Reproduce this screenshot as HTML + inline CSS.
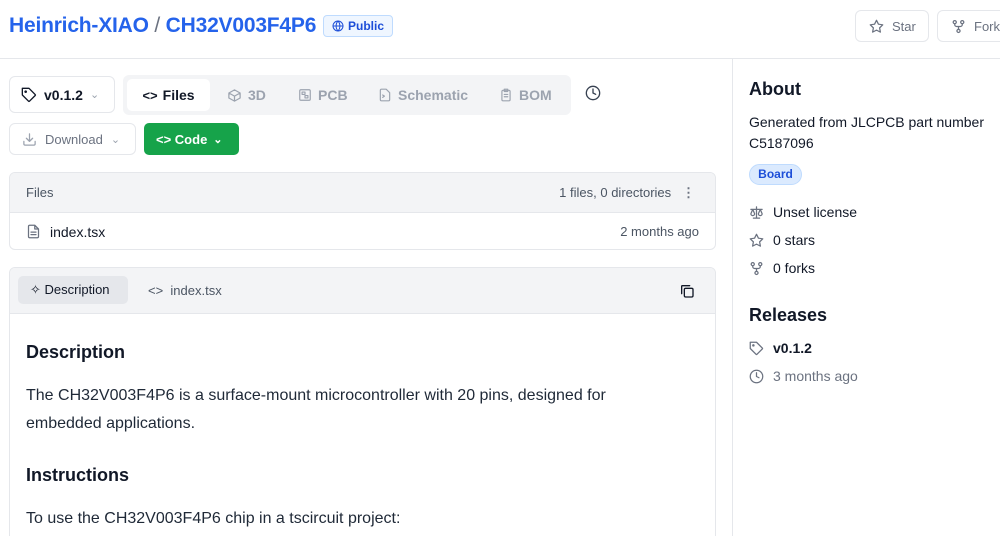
<!DOCTYPE html>
<html style="width:1000px;height:536px;overflow:hidden"><head><meta charset="utf-8"><style>
*{box-sizing:border-box;margin:0;padding:0}
body{width:1000px;height:536px;overflow:hidden;background:#fff;font-family:"Liberation Sans",sans-serif;color:#111827;position:relative}
.a{position:absolute}
svg{fill:none;stroke:currentColor;stroke-width:2;stroke-linecap:round;stroke-linejoin:round}
.btn{position:absolute;border:1px solid #e5e7eb;border-radius:6px;display:flex;align-items:center;background:#fff}
</style></head><body>
<div class="a" style="left:9px;top:14px;font-size:21px;font-weight:bold;color:#2563eb;letter-spacing:-0.2px">Heinrich-XIAO<span style="color:#6b7280;font-weight:normal"> / </span>CH32V003F4P6</div>
<div class="a" style="left:323px;top:15px;width:70px;height:22px;border:1px solid #bfdbfe;background:#eff6ff;border-radius:4px;color:#1d4ed8;font-size:12px;font-weight:bold;display:flex;align-items:center;padding-left:8px;gap:4px"><svg width="12" height="12" viewBox="0 0 24 24"><circle cx="12" cy="12" r="10"/><path d="M2 12h20M12 2a15 15 0 0 1 0 20M12 2a15 15 0 0 0 0 20"/></svg>Public</div>
<div class="btn" style="left:855px;top:10px;width:74px;height:32px;padding-left:13px;gap:8px;color:#6b7280;font-size:13px"><svg width="15" height="15" viewBox="0 0 24 24"><path d="M12 2l3.1 6.3 6.9 1-5 4.9 1.2 6.8L12 17.8 5.8 21l1.2-6.8-5-4.9 6.9-1z"/></svg>Star</div>
<div class="btn" style="left:937px;top:10px;width:80px;height:32px;padding-left:13px;gap:8px;color:#6b7280;font-size:13px"><svg width="15" height="15" viewBox="0 0 24 24"><circle cx="6" cy="5" r="2.5"/><circle cx="18" cy="5" r="2.5"/><circle cx="12" cy="19" r="2.5"/><path d="M6 8v1a3 3 0 0 0 3 3h6a3 3 0 0 0 3-3V8M12 12v4"/></svg>Fork</div>
<div class="a" style="left:0;top:58px;width:1000px;height:1px;background:#e5e7eb"></div>
<div class="a" style="left:732px;top:58px;width:1px;height:478px;background:#e5e7eb"></div>

<div class="btn" style="left:9px;top:76px;width:106px;height:37px;padding-left:11px;gap:7px;font-size:14px;font-weight:bold;color:#111827"><svg width="16" height="16" viewBox="0 0 24 24"><path d="M12 2H2v10l9.3 9.3a1 1 0 0 0 1.4 0l8.6-8.6a1 1 0 0 0 0-1.4z"/><circle cx="7" cy="7" r="1"/></svg>v0.1.2 <span style="color:#9ca3af;font-weight:normal;font-size:11px">⌄</span></div>
<div class="a" style="left:123px;top:75px;width:448px;height:40px;background:#f3f4f6;border-radius:6px"></div>
<div class="a" style="left:127px;top:79px;width:83px;height:32px;background:#fff;border-radius:5px;display:flex;align-items:center;justify-content:center;gap:5px;font-size:14px;font-weight:bold"><span style="font-size:13px">&lt;&gt;</span>Files</div>
<div class="a" style="left:227px;top:87px;font-size:14px;font-weight:bold;color:#9ca3af;display:flex;gap:6px;align-items:center"><svg width="15" height="15" viewBox="0 0 24 24"><path d="M21 8l-9-5-9 5v8l9 5 9-5zM3 8l9 5 9-5M12 13v8"/></svg>3D</div>
<div class="a" style="left:298px;top:87px;font-size:14px;font-weight:bold;color:#9ca3af;display:flex;gap:6px;align-items:center"><svg width="14" height="14" viewBox="0 0 24 24"><rect x="3" y="3" width="18" height="18" rx="2"/><rect x="7" y="7" width="5" height="4"/><rect x="12" y="13" width="5" height="4"/></svg>PCB</div>
<div class="a" style="left:378px;top:87px;font-size:14px;font-weight:bold;color:#9ca3af;display:flex;gap:6px;align-items:center"><svg width="14" height="14" viewBox="0 0 24 24"><path d="M14 2H6a2 2 0 0 0-2 2v16a2 2 0 0 0 2 2h12a2 2 0 0 0 2-2V8z"/><path d="M8 12l3 2-3 2"/></svg>Schematic</div>
<div class="a" style="left:499px;top:87px;font-size:14px;font-weight:bold;color:#9ca3af;display:flex;gap:6px;align-items:center"><svg width="14" height="14" viewBox="0 0 24 24"><rect x="5" y="4" width="14" height="18" rx="2"/><path d="M9 2h6v4H9zM9 11h6M9 15h6"/></svg>BOM</div>
<svg class="a" style="left:585px;top:85px;color:#374151" width="16" height="16" viewBox="0 0 24 24"><circle cx="12" cy="12" r="10"/><path d="M12 6v6l4 2"/></svg>

<div class="btn" style="left:9px;top:123px;width:127px;height:32px;padding-left:12px;gap:8px;font-size:13px;color:#6b7280"><svg width="15" height="15" viewBox="0 0 24 24" style="color:#9ca3af"><path d="M21 15v4a2 2 0 0 1-2 2H5a2 2 0 0 1-2-2v-4M7 10l5 5 5-5M12 15V3"/></svg>Download <span style="color:#9ca3af;font-size:11px">⌄</span></div>
<div class="a" style="left:144px;top:123px;width:95px;height:32px;background:#16a34a;border-radius:5px;color:#fff;font-size:13px;font-weight:bold;display:flex;align-items:center;padding-left:12px;gap:6px">&lt;&gt; Code <span style="font-size:11px">⌄</span></div>

<div class="a" style="left:9px;top:172px;width:707px;height:78px;border:1px solid #e5e7eb;border-radius:6px;overflow:hidden">
<div style="height:40px;background:#f3f4f6;border-bottom:1px solid #e5e7eb;display:flex;align-items:center;justify-content:space-between;padding:0 20px 0 16px;font-size:13px;color:#4b5563"><span>Files</span><span>1 files, 0 directories &nbsp; <b style="color:#6b7280">⋮</b></span></div>
<div style="height:37px;display:flex;align-items:center;justify-content:space-between;padding:0 16px;font-size:14px"><span style="display:flex;align-items:center;gap:9px"><svg width="15" height="15" viewBox="0 0 24 24" style="color:#6b7280"><path d="M14 2H6a2 2 0 0 0-2 2v16a2 2 0 0 0 2 2h12a2 2 0 0 0 2-2V8zM14 2v6h6M8 13h8M8 17h8"/></svg>index.tsx</span><span style="font-size:13px;color:#4b5563">2 months ago</span></div>
</div>

<div class="a" style="left:9px;top:267px;width:707px;height:290px;border:1px solid #e5e7eb;border-radius:6px;overflow:hidden">
<div style="height:46px;background:#f3f4f6;border-bottom:1px solid #e5e7eb;position:relative">
<div class="a" style="left:8px;top:8px;width:110px;height:28px;background:#e5e7eb;border-radius:5px;display:flex;align-items:center;padding-left:12px;gap:6px;font-size:13px">✧ Description</div>
<div class="a" style="left:138px;top:15px;font-size:13px;color:#4b5563">&lt;&gt; &nbsp;index.tsx</div>
<svg class="a" style="left:669px;top:15px" width="16" height="16" viewBox="0 0 24 24"><rect x="8" y="8" width="13" height="13" rx="2"/><path d="M4 16V5a1 1 0 0 1 1-1h11"/></svg>
</div>
<div class="a" style="left:16px;top:74px;font-size:18px;font-weight:bold">Description</div>
<div class="a" style="left:16px;top:114px;width:620px;font-size:16px;line-height:28px;color:#1f2937">The CH32V003F4P6 is a surface-mount microcontroller with 20 pins, designed for embedded applications.</div>
<div class="a" style="left:16px;top:197px;font-size:18px;font-weight:bold">Instructions</div>
<div class="a" style="left:16px;top:242px;font-size:16px;color:#1f2937">To use the CH32V003F4P6 chip in a tscircuit project:</div>
</div>

<div class="a" style="left:749px;top:79px;font-size:18px;font-weight:bold">About</div>
<div class="a" style="left:749px;top:112px;font-size:14px;line-height:21px;width:250px">Generated from JLCPCB part number C5187096</div>
<div class="a" style="left:749px;top:164px;width:53px;height:21px;border:1px solid #bfdbfe;background:#dbeafe;border-radius:11px;color:#1d4ed8;font-size:12px;font-weight:bold;text-align:center;line-height:19px">Board</div>
<div class="a" style="left:749px;top:198px;font-size:14px;line-height:28px">
<div style="display:flex;align-items:center;gap:9px"><svg width="15" height="15" viewBox="0 0 24 24" style="color:#6b7280"><path d="M12 3v18M7 21h10M3 7h18M6 7l-3 7a3 3 0 0 0 6 0zM18 7l-3 7a3 3 0 0 0 6 0z"/></svg>Unset license</div>
<div style="display:flex;align-items:center;gap:9px"><svg width="15" height="15" viewBox="0 0 24 24" style="color:#6b7280"><path d="M12 2l3.1 6.3 6.9 1-5 4.9 1.2 6.8L12 17.8 5.8 21l1.2-6.8-5-4.9 6.9-1z"/></svg>0 stars</div>
<div style="display:flex;align-items:center;gap:9px"><svg width="15" height="15" viewBox="0 0 24 24" style="color:#6b7280"><circle cx="6" cy="5" r="2.5"/><circle cx="18" cy="5" r="2.5"/><circle cx="12" cy="19" r="2.5"/><path d="M6 8v1a3 3 0 0 0 3 3h6a3 3 0 0 0 3-3V8M12 12v4"/></svg>0 forks</div>
</div>
<div class="a" style="left:749px;top:305px;font-size:18px;font-weight:bold">Releases</div>
<div class="a" style="left:749px;top:334px;font-size:14px;line-height:28px">
<div style="display:flex;align-items:center;gap:9px;font-weight:bold"><svg width="15" height="15" viewBox="0 0 24 24" style="color:#6b7280"><path d="M12 2H2v10l9.3 9.3a1 1 0 0 0 1.4 0l8.6-8.6a1 1 0 0 0 0-1.4z"/><circle cx="7" cy="7" r="1"/></svg>v0.1.2</div>
<div style="display:flex;align-items:center;gap:9px;color:#6b7280"><svg width="15" height="15" viewBox="0 0 24 24"><circle cx="12" cy="12" r="10"/><path d="M12 6v6l4 2"/></svg>3 months ago</div>
</div>
</body></html>
